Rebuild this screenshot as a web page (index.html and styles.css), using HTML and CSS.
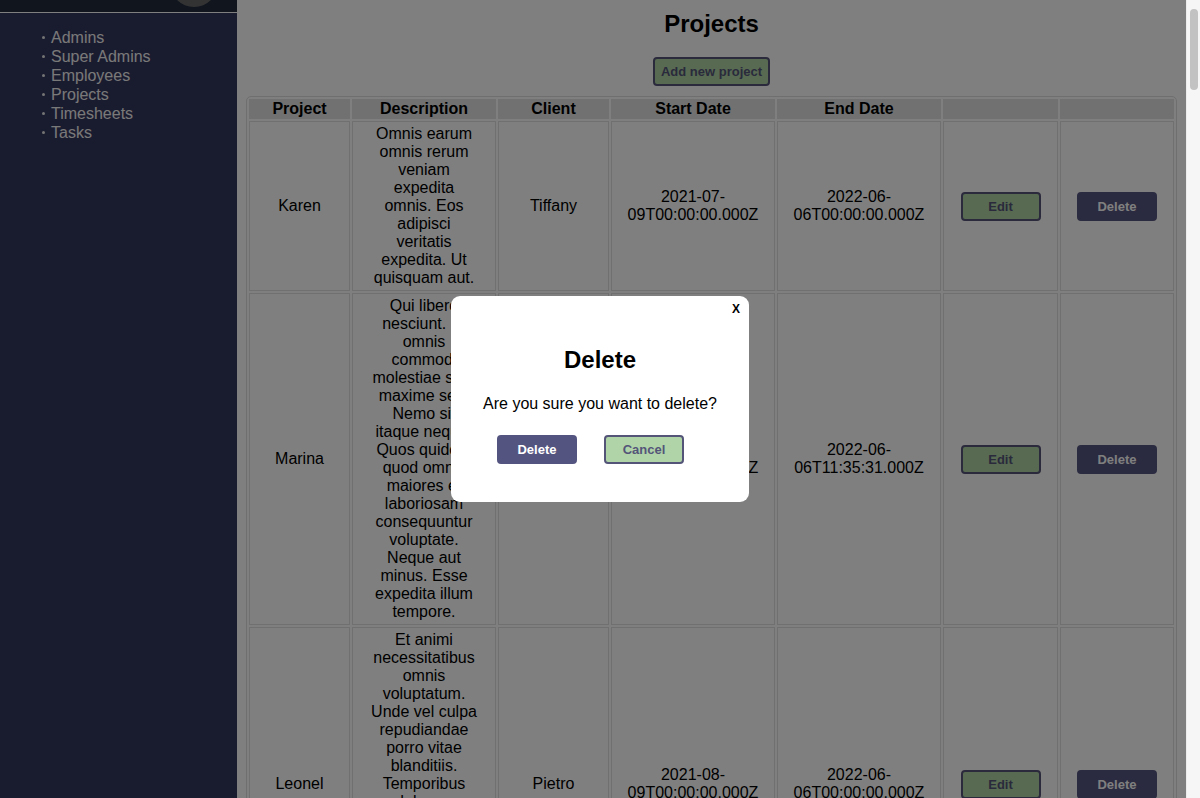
FILE: index.html
```html
<!DOCTYPE html>
<html lang="en">
<head>
<meta charset="utf-8">
<title>Projects</title>
<link rel="stylesheet" href="styles.css">
</head>
<body>
<div class="app">
  <aside class="sidebar">
    <div class="brand"><div class="logo"></div></div>
    <ul class="nav">
      <li>Admins</li>
      <li>Super Admins</li>
      <li>Employees</li>
      <li>Projects</li>
      <li>Timesheets</li>
      <li>Tasks</li>
    </ul>
  </aside>
  <main class="main">
    <h2 class="title">Projects</h2>
    <div class="add-row"><button class="btn btn-green btn-add">Add new project</button></div>
    <table class="grid">
      <thead>
        <tr>
          <th class="c-proj">Project</th>
          <th class="c-desc">Description</th>
          <th class="c-client">Client</th>
          <th class="c-date">Start Date</th>
          <th class="c-date">End Date</th>
          <th class="c-act"></th>
          <th class="c-act2"></th>
        </tr>
      </thead>
      <tbody>
        <tr>
          <td>Karen</td>
          <td class="desc">Omnis earum omnis rerum veniam expedita omnis. Eos adipisci veritatis expedita. Ut quisquam aut.</td>
          <td>Tiffany</td>
          <td>2021-07-09T00:00:00.000Z</td>
          <td>2022-06-06T00:00:00.000Z</td>
          <td><button class="btn btn-green">Edit</button></td>
          <td><button class="btn btn-purple">Delete</button></td>
        </tr>
        <tr>
          <td>Marina</td>
          <td class="desc">Qui libero nesciunt. Et omnis commodi molestiae sunt maxime sed. Nemo sit itaque neque. Quos quidem quod omnis maiores et laboriosam consequuntur voluptate. Neque aut minus. Esse expedita illum tempore.</td>
          <td>Jorge</td>
          <td>2021-09-01T00:00:00.000Z</td>
          <td>2022-06-06T11:35:31.000Z</td>
          <td><button class="btn btn-green">Edit</button></td>
          <td><button class="btn btn-purple">Delete</button></td>
        </tr>
        <tr>
          <td>Leonel</td>
          <td class="desc">Et animi necessitatibus omnis voluptatum. Unde vel culpa repudiandae porro vitae blanditiis. Temporibus dolorem voluptas et quia. Quasi ut sed ut aliquam quisquam omnis. Ipsum velit sint rerum. Consequatur.</td>
          <td>Pietro</td>
          <td>2021-08-09T00:00:00.000Z</td>
          <td>2022-06-06T00:00:00.000Z</td>
          <td><button class="btn btn-green">Edit</button></td>
          <td><button class="btn btn-purple">Delete</button></td>
        </tr>
        <tr>
          <td>Ramona</td>
          <td class="desc">Dolores et aut est. Voluptatem quia ut magnam sit ipsa. Aut nisi officiis molestias doloribus dolor. Autem rerum sed numquam fugit eius.</td>
          <td>Ezequiel</td>
          <td>2021-10-12T00:00:00.000Z</td>
          <td>2022-06-06T00:00:00.000Z</td>
          <td><button class="btn btn-green">Edit</button></td>
          <td><button class="btn btn-purple">Delete</button></td>
        </tr>
        <tr>
          <td>Bruno</td>
          <td class="desc">Sit deserunt ipsam nemo. Voluptas eum porro tempora. Facilis doloremque rerum accusantium minima harum. Quo et ut nulla aut.</td>
          <td>Agustina</td>
          <td>2021-11-03T00:00:00.000Z</td>
          <td>2022-06-06T00:00:00.000Z</td>
          <td><button class="btn btn-green">Edit</button></td>
          <td><button class="btn btn-purple">Delete</button></td>
        </tr>
        <tr>
          <td>Camila</td>
          <td class="desc">Repellendus aut qui sequi. Odit ut sint nisi enim. Debitis eveniet quia velit est quibusdam. Vitae consequatur nam corporis ut molestiae voluptatibus.</td>
          <td>Lucas</td>
          <td>2021-12-15T00:00:00.000Z</td>
          <td>2022-06-06T00:00:00.000Z</td>
          <td><button class="btn btn-green">Edit</button></td>
          <td><button class="btn btn-purple">Delete</button></td>
        </tr>
      </tbody>
    </table>
  </main>
</div>

<div class="overlay">
  <div class="modal">
    <div class="modal-close-row"><button class="modal-close">X</button></div>
    <h2 class="modal-title">Delete</h2>
    <p class="modal-text">Are you sure you want to delete?</p>
    <div class="modal-actions">
      <button class="btn btn-purple btn-modal">Delete</button>
      <button class="btn btn-green btn-modal">Cancel</button>
    </div>
  </div>
</div>

<div class="scrollbar"><div class="scrollbar-thumb"></div></div>
</body>
</html>
```
FILE: styles.css
```css
html, body {
  margin: 0;
  padding: 0;
}

body {
  font-family: "Liberation Sans", Arial, Helvetica, sans-serif;
  font-size: 16px;
  color: #000;
  background: #fff;
}

.app {
  display: flex;
  align-items: stretch;
  min-height: 100vh;
  margin-right: 14px;
}

/* Sidebar */
.sidebar {
  width: 237px;
  flex: 0 0 237px;
  background: #33365f;
  color: #ffffff;
}

.brand {
  height: 12px;
  background: #202a3c;
  border-bottom: 1px solid #ffffff;
  overflow: hidden;
  display: flex;
  justify-content: flex-end;
  padding-right: 19px;
}

.logo {
  width: 48px;
  height: 48px;
  border-radius: 50%;
  background: #666666;
  margin-top: -41px;
}

.nav {
  list-style: none;
  margin: 15px 0 0;
  padding: 0 0 0 51px;
}

.nav li {
  position: relative;
  font-size: 16px;
  line-height: 19px;
  color: #f2f2f2;
}

.nav li::before {
  content: "";
  position: absolute;
  left: -9px;
  top: 8px;
  width: 3px;
  height: 3px;
  border-radius: 50%;
  background: #e8e8e8;
}

/* Main */
.main {
  flex: 1 1 auto;
  min-width: 0;
  padding: 10px 9px 40px;
}

.title {
  margin: 0;
  text-align: center;
  font-size: 24px;
  line-height: 28px;
  font-weight: bold;
}

.add-row {
  display: flex;
  justify-content: center;
  margin-top: 19px;
}

.btn {
  font-family: "Liberation Sans", Arial, Helvetica, sans-serif;
  font-size: 13px;
  font-weight: bold;
  height: 29px;
  width: 80px;
  border-radius: 4px;
  cursor: pointer;
  padding: 0;
}

.btn-green {
  background: #b0d5a4;
  color: #545479;
  border: 2px solid #545479;
}

.btn-purple {
  background: #545480;
  color: #ffffff;
  border: 2px solid #545480;
}

.btn-add {
  width: 117px;
}

/* Table */
.grid {
  width: 100%;
  margin-top: 10px;
  table-layout: fixed;
  border: 1px solid #dedede;
  border-radius: 5px;
  border-spacing: 2px;
}

.grid th,
.grid td {
  box-sizing: border-box;
  text-align: center;
  vertical-align: middle;
  line-height: 18px;
}

.grid th {
  background: #e2e2e2;
  border: 1px solid #e2e2e2;
  padding: 0;
  font-weight: bold;
}

.grid td {
  border: 1px solid #e0e0e0;
  padding: 3px 1px 3px;
}

.grid td.desc {
  padding-left: 16px;
  padding-right: 16px;
}

.c-proj { width: 101px; }
.c-desc { width: 144px; }
.c-client { width: 111px; }
.c-date { width: 164px; }
.c-act { width: 115px; }
.c-act2 { width: 114px; }

/* Overlay & modal */
.overlay {
  position: fixed;
  top: 0;
  left: 0;
  width: 100vw;
  height: 100vh;
  background: rgba(0, 0, 0, 0.5);
  display: flex;
  align-items: center;
  justify-content: center;
  z-index: 10;
}

.modal {
  width: 298px;
  box-sizing: border-box;
  background: #ffffff;
  border-radius: 9px;
  padding: 6px 0 38px;
}

.modal-close-row {
  display: flex;
  justify-content: flex-end;
  padding-right: 9px;
}

.modal-close {
  border: none;
  background: transparent;
  padding: 0;
  font-family: "Liberation Sans", Arial, Helvetica, sans-serif;
  font-size: 12px;
  font-weight: bold;
  line-height: 14px;
  height: 14px;
  color: #000;
  cursor: pointer;
}

.modal-title {
  margin: 30px 0 0;
  text-align: center;
  font-size: 24px;
  line-height: 28px;
  font-weight: bold;
}

.modal-text {
  margin: 21px 0 0;
  text-align: center;
  font-size: 16px;
  line-height: 18px;
}

.modal-actions {
  display: flex;
  gap: 27px;
  margin-top: 22px;
  padding-left: 46px;
}

.btn-modal {
  width: 80px;
}

.modal .btn-green {
  background: #b0d4a8;
}

/* Window scrollbar (not covered by the overlay) */
.scrollbar {
  position: fixed;
  top: 0;
  right: 0;
  width: 14px;
  height: 100vh;
  background: #f6f6f6;
  border-left: 1px solid #ececec;
  box-sizing: border-box;
  z-index: 20;
  padding: 9px 2px 0 3px;
}

.scrollbar-thumb {
  height: 81px;
  border-radius: 4px;
  background: #c2c2c2;
}
```
